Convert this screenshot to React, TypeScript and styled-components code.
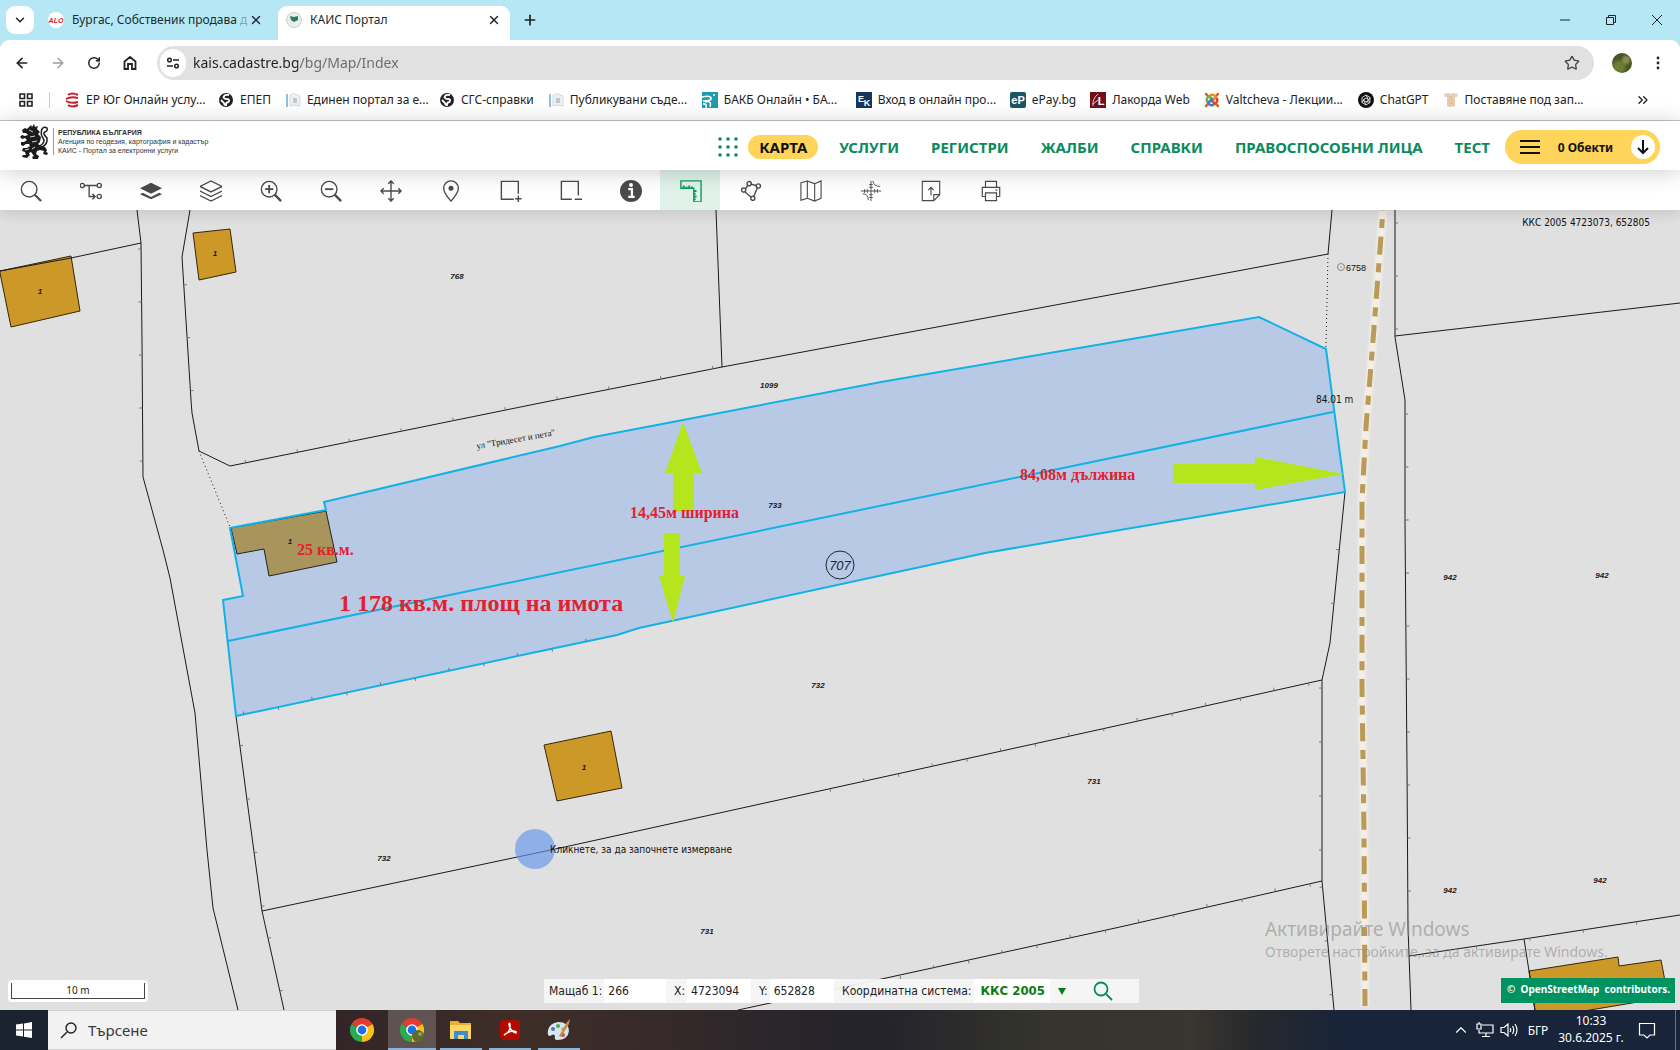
import React from "react";
import styled, { createGlobalStyle } from "styled-components";
import { ArrowLeft, ArrowRight, RotateCw, Star, X, Plus, ChevronDown, ChevronUp, ChevronsRight } from "lucide-react";

const ui = `"Noto Sans", "Open Sans", sans-serif`;
const mapUi = `"DejaVu Sans Condensed", "DejaVu Sans", sans-serif`;
const green = "#0b8a5c";

const GlobalStyle = createGlobalStyle`
  * { box-sizing: border-box; }
  body { margin: 0; font-family: ${ui}; color: #222; overflow: hidden; }
  button, input, select { font-family: inherit; border: 0; background: none; padding: 0; margin: 0; color: inherit; outline: 0; }
  a { color: inherit; text-decoration: none; }
  svg { display: block; flex: none; }
`;

const Screen = styled.div`
  display: flex;
  flex-direction: column;
  height: 100vh;
  min-width: 0;
`;

/* ---------- browser window ---------- */

const TabStrip = styled.div`
  display: flex;
  align-items: flex-end;
  gap: 6px;
  height: 40px;
  flex: none;
  background: #b5e8f4;
  padding-left: 6px;
`;

const TabSearch = styled.button`
  width: 28px;
  height: 28px;
  margin-bottom: 6px;
  border-radius: 9px;
  background: #fff;
  display: grid;
  place-items: center;
`;

const Tab = styled.div<{ $active?: boolean }>`
  display: flex;
  align-items: center;
  gap: 8px;
  width: 232px;
  height: 34px;
  padding: 0 8px 6px 8px;
  font-size: 12px;
  line-height: 20px;
  border-radius: 9px 9px 0 0;
  background: ${(p) => (p.$active ? "#fff" : "transparent")};
  color: #1b2b30;
`;

const TabTitle = styled.span`
  flex: 1;
  min-width: 0;
  white-space: nowrap;
`;

const Fading = styled.span`
  opacity: 0.35;
`;

const WindowControls = styled.div`
  display: flex;
`;

const IconButton = styled.button<{ $w?: number; $h?: number }>`
  width: ${(p) => p.$w ?? 36}px;
  height: ${(p) => p.$h ?? 34}px;
  display: grid;
  place-items: center;
  flex: none;
`;

const Spacer = styled.div`
  flex: 1;
`;

const ChromeBack = styled.div`
  background: #b5e8f4;
  flex: none;
`;

const ChromePanel = styled.div`
  background: #fff;
  border-radius: 9px 9px 0 0;
  border-bottom: 1px solid #c4c4c4;
  height: 81px;
`;

const AddressRow = styled.div`
  display: flex;
  align-items: center;
  height: 46px;
  padding: 0 4px;
`;

const Omnibox = styled.label`
  flex: 1;
  height: 34px;
  margin: 0 10px 0 9px;
  border-radius: 17px;
  background: #e1e1e1;
  display: flex;
  align-items: center;
  gap: 7px;
  padding: 0 14px 0 3px;
`;

const SiteInfo = styled.span`
  width: 26px;
  height: 28px;
  border-radius: 14px;
  background: #fff;
  display: grid;
  place-items: center;
`;

const UrlInput = styled.input`
  flex: 1;
  min-width: 0;
  font-size: 14px;
  line-height: 20px;
  font-family: "Noto Sans", sans-serif;
  background: linear-gradient(90deg, #1f1f1f 105px, #6a6a6a 105px);
  background-clip: text;
  -webkit-text-fill-color: transparent;
`;

const Avatar = styled.span`
  width: 20px;
  height: 20px;
  border-radius: 50%;
  background: radial-gradient(circle at 70% 35%, #8c8a50 0 12%, transparent 30%), radial-gradient(circle at 35% 70%, #6d8031 0 20%, transparent 45%), #4b5524;
`;

const BookmarkBar = styled.nav`
  display: flex;
  align-items: center;
  height: 28px;
  padding: 0 24px 0 18px;
`;

const BarRule = styled.span`
  width: 1px;
  height: 16px;
  background: #a9d8ec;
  margin: 0 14px 0 15px;
`;

const Bookmark = styled.a<{ $full?: boolean }>`
  display: flex;
  align-items: center;
  gap: 6px;
  flex: none;
  width: ${(p) => (p.$full ? "154px" : "auto")};
  margin-right: ${(p) => (p.$full ? "0" : "14px")};
  font-size: 12px;
  line-height: 16px;
  white-space: nowrap;
  color: #222;
`;

/* ---------- portal header ---------- */

const PortalHeader = styled.header`
  display: flex;
  align-items: center;
  height: 49px;
  flex: none;
  padding: 3px 20px 0;
  background: #fff;
  position: relative;
  z-index: 2;
  box-shadow: 0 2px 22px rgba(0, 0, 0, 0.2);
`;

const Brand = styled.a`
  display: flex;
  align-items: flex-start;
  align-self: flex-start;
  gap: 4px;
`;

const BrandText = styled.span`
  border-left: 1px solid #999;
  padding-left: 4px;
  margin-top: 4px;
  display: grid;
  font-family: "Liberation Sans Narrow", "Liberation Sans", sans-serif;
  font-size: 7px;
  line-height: 9px;
  color: #333;
  white-space: nowrap;
`;

const PortalNav = styled.nav`
  display: flex;
  align-items: center;
  gap: 10px;
`;

const NavLink = styled.a<{ $active?: boolean }>`
  font-size: 15px;
  font-weight: 700;
  line-height: 24px;
  white-space: nowrap;
  padding: 0 11px;
  border-radius: 12px;
  color: ${(p) => (p.$active ? "#111" : green)};
  background: ${(p) => (p.$active ? "#ffd45a" : "transparent")};
`;

const ObjectsButton = styled.button`
  display: flex;
  align-items: center;
  width: 155px;
  height: 34px;
  margin-left: 4px;
  padding: 0 5px 0 15px;
  border-radius: 17px;
  background: #ffd45a;
  font-size: 12px;
  font-weight: 700;
  color: #111;
`;

const ObjectsLabel = styled.span`
  flex: 1;
  text-align: center;
`;

const RoundMark = styled.span`
  width: 24px;
  height: 24px;
  border-radius: 50%;
  background: #fff;
  display: grid;
  place-items: center;
`;

const ToolBar = styled.div`
  display: flex;
  height: 40px;
  flex: none;
  background: #fff;
  position: relative;
  z-index: 1;
  box-shadow: 0 2px 16px rgba(0, 0, 0, 0.14);
`;

const Tool = styled.button<{ $active?: boolean }>`
  width: 60px;
  height: 40px;
  padding: 2px 0 0 2px;
  display: grid;
  place-items: center;
  color: ${(p) => (p.$active ? "#0a9a66" : "#4a4a4a")};
  background: ${(p) => (p.$active ? "#e0f2ea" : "transparent")};
`;

/* ---------- map ---------- */

const MapArea = styled.main`
  flex: 1;
  min-height: 0;
  position: relative;
  background: #e0e0e0;
  overflow: hidden;
`;

const MapSvg = styled.svg`
  width: 100%;
  height: 100%;
`;

const MapFooter = styled.div`
  position: absolute;
  left: 8px;
  right: 5px;
  bottom: 7px;
  height: 25px;
  display: grid;
  grid-template-columns: 1fr auto 1fr;
  align-items: center;
`;

const ScaleBox = styled.div`
  width: 140px;
  height: 22px;
  padding: 3px;
  border-radius: 4px;
  background: #fff;
`;

const ScaleLine = styled.div`
  height: 16px;
  border: 1px solid #444;
  border-top: 0;
  font-size: 10px;
  line-height: 15px;
  text-align: center;
`;

const StatusBar = styled.form`
  display: flex;
  align-items: center;
  width: 595px;
  height: 24px;
  padding-left: 5px;
  background: rgba(246, 246, 246, 0.95);
  font-family: ${mapUi};
  font-size: 12px;
  white-space: nowrap;
  color: #222;
`;

const Field = styled.label<{ $w: number }>`
  display: flex;
  align-items: center;
  gap: 2px;
  width: ${(p) => p.$w}px;
`;

const FieldInput = styled.input`
  flex: 1;
  min-width: 0;
  height: 24px;
  margin-right: 8px;
  padding-left: 4px;
  background: #fff;
  font-size: 12px;
`;

const SystemSelect = styled.select`
  appearance: none;
  width: 80px;
  height: 24px;
  padding-left: 7px;
  background: #fff;
  color: #0a7d12;
  font-size: 13px;
  font-weight: 700;
`;

const Attribution = styled.a`
  justify-self: end;
  display: flex;
  align-items: center;
  justify-content: space-between;
  width: 174px;
  height: 25px;
  padding: 0 5px 4px 6px;
  background: #009260;
  color: #fff;
  font-size: 10px;
  font-weight: 700;
  white-space: nowrap;
`;

/* ---------- taskbar ---------- */

const TaskBar = styled.footer`
  display: flex;
  height: 40px;
  flex: none;
  background: linear-gradient(90deg, #1b2230 0, #1b2230 3%, #332527 20%, #3f2e27 31%, #35292a 40%, #25242a 50%, #26242b 53%, #34342c 62%, #39352f 71%, #26282d 75%, #18243a 80%, #18243a 100%);
  color: #fff;
`;

const TaskButton = styled.button<{ $w: number; $open?: boolean; $active?: boolean }>`
  width: ${(p) => p.$w}px;
  height: 40px;
  display: grid;
  place-items: center;
  background: ${(p) => (p.$active ? "rgba(255,255,255,0.2)" : "transparent")};
  ${(p) =>
    p.$open &&
    `background-image: linear-gradient(#87b4d8, #87b4d8);
     background-size: ${p.$active ? "100%" : "42px"} 2px;
     background-position: bottom center;
     background-repeat: no-repeat;`}
`;

const TaskSearch = styled.label`
  width: 288px;
  height: 40px;
  display: flex;
  align-items: center;
  gap: 11px;
  padding-left: 12px;
  background: #f2f2f2;
  border: 1px solid #d0d0d0;
  border-width: 1px 0;
  color: #222;
`;

const TaskInput = styled.input`
  flex: 1;
  min-width: 0;
  font-size: 15px;
  line-height: 20px;
  &::placeholder { color: #3a3a3a; opacity: 1; }
`;

const Clock = styled.time`
  width: 72px;
  text-align: center;
  font-size: 12px;
  line-height: 17px;
  padding-top: 2px;
  white-space: nowrap;
`;

const Lang = styled.button`
  width: 34px;
  font-size: 12px;
`;

const ShowDesktop = styled.button`
  width: 5px;
  margin-left: 8px;
  border-left: 1px solid #6a7383;
`;

/* ---------- small drawings ---------- */

const S = (p: React.SVGProps<SVGSVGElement> & { size: number; box?: number }) => {
  const { size, box, children, ...rest } = p;
  return (
    <svg width={size} height={size} viewBox={`0 0 ${box ?? size} ${box ?? size}`} fill="none" stroke="currentColor" aria-hidden="true" {...rest}>
      {children}
    </svg>
  );
};

const logoText = { textAnchor: "middle" as const, fontFamily: "Liberation Sans, sans-serif", fontWeight: 700, fill: "#fff", stroke: "none" };

const marks: Record<string, React.ReactNode> = {
  er: (
    <S size={16} stroke="#c8202c" strokeWidth="2">
      <path d="M14 3Q8 0 4 3M14 6Q7 4 2 7M14 10Q7 12 2 9M14 13Q8 16 4 13" />
    </S>
  ),
  globe: (
    <S size={16} stroke="none">
      <circle cx="8" cy="8" r="7" fill="#222" />
      <path d="M11 3Q6 2 5.500 5.500Q7 7.500 10 7Q12 8 10.500 10Q8 10 8 13Q6 13 6 11L3 8" fill="none" stroke="#fff" strokeWidth="1.800" />
    </S>
  ),
  doc: (
    <S size={16} stroke="none">
      <path d="M1 2H3V15H1Z" fill="#8fbfe2" />
      <path d="M5 3Q8 1 10 2L15 4V14Q10 12 5 14Z" fill="#eef1f3" stroke="#d5dade" />
      <path d="M8 6H12V11H8Z" fill="#c0c7d1" />
    </S>
  ),
  bakb: (
    <S size={16} stroke="none">
      <path d="M0 0H16V16H0Z" fill="#1f9aae" />
      <path d="M0 5Q8 3 9 6T1 9M3 10Q10 8 8 15M1 12Q5 11 4 16" fill="none" stroke="#fff" strokeWidth="1.600" />
      <circle cx="12" cy="3" r="1" fill="#fff" />
    </S>
  ),
  ek: (
    <S size={16}>
      <path d="M0 0H16V16H0Z" fill="#15355c" stroke="none" />
      <text x="5" y="10" fontSize="9" {...logoText}>E</text>
      <text x="11" y="14" fontSize="9" {...logoText}>K</text>
    </S>
  ),
  epay: (
    <S size={16}>
      <rect width="16" height="16" rx="2" fill="#1c5563" stroke="none" />
      <text x="8" y="12" fontSize="11" {...logoText}>eP</text>
    </S>
  ),
  lak: (
    <S size={16} stroke="#e6cfcf">
      <path d="M0 0H16V16H0Z" fill="#711018" stroke="none" />
      <path d="M8 2Q2 7 3 14M3 12L8 8" />
      <text x="11" y="13" fontSize="11" {...logoText}>L</text>
    </S>
  ),
  joomla: (
    <S size={16} strokeWidth="2.500" strokeLinecap="round">
      <path d="M3 9Q2 6 5 4L9 8" stroke="#72b043" />
      <path d="M7 3Q10 2 12 5L8 9" stroke="#f08a24" />
      <path d="M13 7Q14 10 11 12L7 8" stroke="#e0452f" />
      <path d="M9 13Q6 14 4 11L8 7" stroke="#3b7fc4" />
      <path d="M2 2L3 3M14 2L13 3M14 14L13 13M2 14L3 13" stroke="#d9662f" />
    </S>
  ),
  gpt: (
    <S size={16} stroke="#fff" strokeWidth="0.800">
      <circle cx="8" cy="8" r="8" fill="#111" stroke="none" />
      <path d="M8 3L12 5.500V10.500L8 13L4 10.500V5.500ZM8 6L10 7V9L8 10L6 9V7ZM8 3L10 7M12 10L8 10M4 10.500L6 7M12 5.500L10 9M8 13L6 9" />
    </S>
  ),
  shirt: (
    <S size={16} stroke="none">
      <path d="M1 2L6 1Q8 3 10 1L15 2L14 5H12V14Q8 16 4 14V5H2Z" fill="#e9cdb0" />
      <path d="M6 5H10M6 8H10M6 11H10" stroke="#d8b48f" />
    </S>
  ),
};

const bookmarks: [string, string, boolean][] = [
  ["er", "ЕР Юг Онлайн услу...", true],
  ["globe", "ЕПЕП", false],
  ["doc", "Единен портал за е...", true],
  ["globe", "СГС-справки", false],
  ["doc", "Публикувани съде...", true],
  ["bakb", "БАКБ Онлайн • БА...", true],
  ["ek", "Вход в онлайн про...", true],
  ["epay", "ePay.bg", false],
  ["lak", "Лакорда Web", false],
  ["joomla", "Valtcheva - Лекции...", true],
  ["gpt", "ChatGPT", false],
  ["shirt", "Поставяне под зап...", true],
];

const tools: { name: string; active?: boolean; icon: React.ReactNode }[] = [
  { name: "Търсене", icon: <><circle cx="10" cy="10" r="8.500" /><path d="M16 16L23 23" strokeWidth="2.300" /></> },
  { name: "Мрежа", icon: <><circle cx="2.500" cy="6" r="2.300" /><circle cx="21" cy="6" r="2.300" /><circle cx="21" cy="18" r="2.300" /><path d="M5 6H18.500M10 6V18H16M13.500 15L16.500 18L13.500 21" /></> },
  { name: "Слой", icon: <><path d="M0 9L12 3L24 9L12 15Z" fill="currentColor" stroke="none" /><path d="M3 14L0 15.500L12 21L24 15.500L21 14L12 18.500Z" fill="currentColor" stroke="none" /></> },
  { name: "Слоеве", icon: <path d="M0 7L12 1L24 7L12 13ZM0 12L12 18L24 12M0 17L12 23L24 17" /> },
  { name: "Приближи", icon: <><circle cx="10" cy="10" r="8.500" /><path d="M16 16L23 23" strokeWidth="2.500" /><path d="M10 5.500V14.500M5.500 10H14.500" strokeWidth="2" /></> },
  { name: "Отдалечи", icon: <><circle cx="10" cy="10" r="8.500" /><path d="M16 16L23 23" strokeWidth="2.500" /><path d="M5.500 10H14.500" strokeWidth="2" /></> },
  { name: "Премести", icon: <path d="M12 1V23M1 12H23M9 4L12 1L15 4M9 20L12 23L15 20M4 9L1 12L4 15M20 9L23 12L20 15" /> },
  { name: "Маркер", icon: <><path d="M12 23Q4 14 4 9A8 8 0 0 1 20 9Q20 14 12 23Z" /><circle cx="12" cy="9" r="2" fill="currentColor" /></> },
  { name: "Добави", icon: <path d="M20 15V1.500H1.500V21H15M20 17V24M16.500 20.500H23.500" /> },
  { name: "Премахни", icon: <path d="M20 17V1.500H1.500V21H13M16 21H24" /> },
  { name: "Информация", icon: <><circle cx="12" cy="12" r="12" fill="currentColor" stroke="none" /><circle cx="12" cy="5.500" r="2.200" fill="#fff" stroke="none" /><path d="M9 10H13V18.500M9 18.500H16" stroke="#fff" strokeWidth="2.500" /></> },
  { name: "Измерване", active: true, icon: <><path d="M1 1H23V24H15V9H1Z" /><path d="M4 6V9M7 7V9M10 6V9M13 7V9M15 12H18M15 15H17M15 18H18M15 21H17" strokeWidth="2" /></> },
  { name: "Геометрия", icon: <><circle cx="10" cy="4" r="2.300" /><circle cx="4" cy="11" r="2.300" /><circle cx="20" cy="6.500" r="2.300" /><circle cx="14" cy="20" r="2.300" /><path d="M6 9.500L8.500 6M12 4.500L17.500 6M19 8.500L15 18M5.500 13L12 18.500" /></> },
  { name: "Карта", icon: <path d="M1 3L8 1V20L1 22ZM8 1L16 4V23L8 20M16 4L23 1V20L16 23" strokeWidth="1.200" /> },
  { name: "Координати", icon: <path d="M12 1V23M1 12H23M14 1Q15 7 22 7M3 15Q9 15 9 22M5 10V14M8 10V14M16 10V14M19 10V14M10 5H14M10 8H14M10 16H14M10 19H14" strokeWidth="1" /> },
  { name: "Качи файл", icon: <path d="M2.500 1.500H21.500V16L15 22.500H2.500ZM15 22.500V16H21.500M12 17V8M9 11L12 8L15 11" strokeWidth="1.200" /> },
  { name: "Печат", icon: <path d="M6 8V1.500H18V8M6 18H2.500V8H21.500V18H18M6 14H18V22.500H6ZM17 11H19" strokeWidth="1.300" /> },
];

const ChromeLogo = ({ user }: { user?: boolean }) => (
  <S size={24} stroke="none">
    <path d="M12 12L1.600 6A12 12 0 0 1 22.400 6Z" fill="#e33b2e" />
    <path d="M12 12L22.400 6A12 12 0 0 1 12 24Z" fill="#fbc116" />
    <path d="M12 12L12 24A12 12 0 0 1 1.600 6Z" fill="#2da94f" />
    <path d="M12 6H22.400L20 5L12 3Z" fill="#e33b2e" />
    <circle cx="12" cy="12" r="5.800" fill="#fff" />
    <circle cx="12" cy="12" r="4.400" fill="#1b72e8" />
    {user && <circle cx="18" cy="18" r="6" fill="#5f6b2c" />}
    {user && <circle cx="20" cy="16" r="2" fill="#a09b52" />}
  </S>
);

const Lion = () => (
  <svg width="29" height="36" viewBox="0 0 29 36" aria-hidden="true">
    <path
      fill="#1c1c1c"
      d="M9 3L11 1L12 3L14 0L15 3L18 2L17 5L20 8L18 10L21 13L20 18L18 20L21 22L25 23L27 26L26 28L28 29L27 31L23 30L24 27L20 26L17 27L16 30L19 32L18 35L13 35L12 33L14 32L11 28L9 29L10 31L7 34L2 33L3 31L6 31L5 28L2 27L3 24L7 24L10 22L9 20L6 20L3 22L1 21L1 18L4 18L7 16L5 14L2 15L0 13L2 11L5 12L8 11L6 9L3 9L2 6L5 4L7 5Z"
    />
    <path fill="none" stroke="#1c1c1c" strokeWidth="1.500" d="M20 22Q26 18 23 14T22 5Q24 2 27 4Q28 7 25 8T27 14Q28 20 22 23" />
    <path fill="none" stroke="#fff" strokeWidth="0.800" d="M9 6L13 8M10 13L15 12M12 18L17 17M5 26L9 25M15 23L12 25M9 30L11 29" />
  </svg>
);

/* ---------- cadastral drawing ---------- */

type P = [number, number];
const pts = (a: P[]) => a.map((p) => p.join(",")).join(" ");

const boundaries: P[][] = [
  [[137, 210], [141, 243], [142, 342], [143, 477], [163, 550], [170, 578], [195, 713], [207, 850], [213, 908], [238, 1010]],
  [[190, 210], [182, 257], [191, 400], [192, 413], [199, 451], [230, 466], [560, 399], [722, 367], [1120, 293], [1328, 254], [1332, 210]],
  [[716, 210], [718, 263], [722, 367]],
  [[0, 271], [71, 258], [141, 243]],
  [[236, 716], [247, 800], [262, 911], [284, 1010]],
  [[262, 911], [560, 848], [1120, 725], [1322, 680]],
  [[1345, 492], [1330, 643], [1322, 680], [1322, 881], [1334, 1010]],
  [[738, 1010], [877, 980], [1120, 927], [1322, 881]],
  [[1395, 210], [1395, 337], [1405, 400], [1405, 523], [1407, 767], [1408, 927], [1411, 1010]],
  [[1395, 336], [1680, 303]],
  [[1409, 956], [1524, 939], [1680, 915]],
  [[1524, 939], [1529, 971], [1535, 1010]],
];

const parcel: P[] = [
  [230, 528], [326, 510], [324, 502], [560, 446], [594, 437], [683, 420], [881, 382], [1120, 341], [1259, 317], [1326, 349],
  [1345, 492], [1120, 530], [985, 553], [639, 628], [617, 635], [560, 647], [236, 716], [223, 600], [243, 596],
];

const buildings: P[][] = [
  [[0, 271], [71, 256], [80, 311], [11, 327], [0, 273]],
  [[193, 233], [230, 229], [236, 272], [199, 280]],
  [[544, 745], [611, 731], [622, 788], [557, 801]],
  [[1529, 971], [1618, 957], [1619, 966], [1661, 960], [1668, 997], [1584, 1011], [1535, 1011]],
];

const parcelNumbers: [string, number, number][] = [
  ["768", 457, 279], ["1099", 769, 388], ["733", 775, 508], ["732", 818, 688], ["731", 1094, 784], ["732", 384, 861],
  ["731", 707, 934], ["942", 1450, 580], ["942", 1602, 578], ["942", 1450, 893], ["942", 1600, 883],
  ["1", 40, 294], ["1", 215, 256], ["1", 290, 544], ["1", 584, 770],
];

const notes: [string, number, number, number][] = [
  ["14,45м ширина", 630, 518, 16],
  ["84,08м дължина", 1020, 480, 16],
  ["25 кв.м.", 297, 555, 16],
  ["1 178 кв.м. площ на имота", 339, 611, 24],
];

/* Short marks at an even step along a boundary, on one side of it or on both in turn. */
const ticks = (a: P, b: P, step: number, start: number, both: boolean, flip = 1) => {
  const len = Math.hypot(b[0] - a[0], b[1] - a[1]);
  const ux = (b[0] - a[0]) / len;
  const uy = (b[1] - a[1]) / len;
  let d = "";
  for (let s = start, i = 0; s < len; s += step, i++) {
    const side = (both && i % 2 ? -1 : 1) * flip;
    const x = a[0] + ux * s;
    const y = a[1] + uy * s;
    d += `M${x.toFixed(1)} ${y.toFixed(1)}l${(uy * 3 * side).toFixed(1)} ${(-ux * 3 * side).toFixed(1)}`;
  }
  return d;
};

const tickPaths = [
  ticks([141, 243], [143, 477], 53, 6, false, -1),
  ticks([182, 257], [191, 400], 53, 28, false),
  ticks([230, 466], [560, 399], 53, 16, false),
  ticks([560, 399], [722, 367], 53, 50, false),
  ticks([236, 716], [617, 635], 35, 8, true),
  ticks([236, 716], [262, 911], 54, 30, false),
  ticks([262, 911], [284, 1010], 54, 28, false),
  ticks([830, 789], [1322, 680], 35, 0, true, -1),
  ticks([900, 976], [1322, 881], 35, 0, true, -1),
  ticks([1322, 687], [1322, 881], 54, 1, false, -1),
  ticks([1322, 881], [1334, 1010], 54, 6, false, -1),
  ticks([1344, 500], [1330, 643], 54, 50, false, -1),
  ticks([1395, 210], [1395, 337], 53, 13, false),
  ticks([1405, 400], [1408, 927], 53, 14, false),
  ticks([1409, 956], [1680, 915], 54, 14, false, -1),
];

const road = "M1383 210L1374 328L1366 427L1362 500L1362 686L1364 833L1365 1006";

const CadastralMap = () => (
  <MapSvg viewBox="0 210 1680 800" preserveAspectRatio="xMidYMid slice" role="img" aria-label="Кадастрална карта">
    <defs>
      <filter id="soft" x="-50%" width="200%"><feGaussianBlur stdDeviation="1" /></filter>
    </defs>
    <g fill="none" strokeLinejoin="round">
      <path d={road} stroke="#f3eee6" strokeWidth="8" filter="url(#soft)" />
      <path d={road} stroke="#b99a58" strokeWidth="5" strokeDasharray="18 8.700 9 8.600" strokeDashoffset="17.600" />
    </g>
    <g fill="#cc9928" stroke="#33270a">
      {buildings.map((b, i) => <polygon key={i} points={pts(b)} />)}
    </g>
    <polygon points={pts(parcel)} fill="#b8c9e6" />
    <polygon points="231,528 326,511 337,562 269,576 264,549 237,554" fill="#a8955c" stroke="#222" />
    <g fill="none" stroke="#1a1a1a">
      {boundaries.map((b, i) => <polyline key={i} points={pts(b)} />)}
      <path d="M199 451L230 527M1328 254L1326 347" strokeDasharray="1 3" />
    </g>
    <g fill="none" stroke="#12b2e4" strokeWidth="2">
      <polygon points={pts(parcel)} />
      <path d="M228 641L1333 412" />
    </g>
    <path d={tickPaths.join("")} stroke="#777" fill="none" />
    <g fill="#b5e61d">
      <path d="M683 422L702 473H694V512H673V473H665Z" />
      <path d="M664 533H680V576H685L673 623L659 576H664Z" />
      <path d="M1173 464H1255V457L1344 474L1255 490V483H1173Z" />
    </g>
    <circle cx="535" cy="849" r="20" fill="#6495ed" fillOpacity="0.650" />
    <circle cx="840" cy="565" r="14" fill="none" stroke="#1c2430" />
    <circle cx="1341" cy="267" r="3.500" fill="none" stroke="#888" />
    <circle cx="1341" cy="267" r="0.700" fill="#888" />
    <g fontFamily="Liberation Sans, Arial, sans-serif" fontSize="8" fontWeight="700" fontStyle="italic" textAnchor="middle" fill="#1a1a1a">
      {parcelNumbers.map(([t, x, y], i) => <text key={i} x={x} y={y}>{t}</text>)}
    </g>
    <text x="840" y="570" textAnchor="middle" fontFamily="Liberation Sans, Arial, sans-serif" fontSize="13" fontStyle="italic" fill="#1c2430">707</text>
    <text x="1346" y="271" fontFamily="Liberation Sans, Arial, sans-serif" fontSize="9" fill="#111">6758</text>
    <text x="477" y="449" transform="rotate(-10 477 449)" fontFamily="Liberation Serif, serif" fontSize="9" fill="#111">ул "Тридесет и пета"</text>
    <g fontFamily="DejaVu Sans Condensed, DejaVu Sans, sans-serif" fontSize="10" fill="#111">
      <text x="1316" y="403">84.01 m</text>
      <text x="1650" y="226" textAnchor="end">ККС 2005 4723073, 652805</text>
      <text x="550" y="853">Кликнете, за да започнете измерване</text>
    </g>
    <g fontFamily="Liberation Serif, serif" fontWeight="700" fill="#e3202e">
      {notes.map(([t, x, y, s]) => <text key={t} x={x} y={y} fontSize={s}>{t}</text>)}
    </g>
    <g fontFamily="Noto Sans, sans-serif" fill="#8c8c8c" fillOpacity="0.600">
      <text x="1265" y="936" fontSize="19">Активирайте Windows</text>
      <text x="1265" y="957" fontSize="14">Отворете настройките, за да активирате Windows.</text>
    </g>
  </MapSvg>
);

const nav = ["КАРТА", "УСЛУГИ", "РЕГИСТРИ", "ЖАЛБИ", "СПРАВКИ", "ПРАВОСПОСОБНИ ЛИЦА", "ТЕСТ"];

export default function App() {
  return (
    <Screen>
      <GlobalStyle />
      <TabStrip>
        <TabSearch aria-label="Раздели"><ChevronDown size={14} strokeWidth={2.5} /></TabSearch>
        <Tab>
          <S size={16} stroke="none"><circle cx="8" cy="8" r="8" fill="#fff" /><text x="8" y="11" fontSize="7" {...logoText} fill="#d8232f" fontStyle="italic">ALO</text></S>
          <TabTitle>Бургас, Собственик продава<Fading> д</Fading></TabTitle>
          <IconButton $w={16} $h={16} aria-label="Затвори"><X size={14} strokeWidth={2.5} /></IconButton>
        </Tab>
        <Tab $active>
          <S size={16} stroke="none"><circle cx="8" cy="8" r="7.500" fill="#e9eeec" stroke="#c7cfcc" /><path d="M4 4L8 5L12 4L12 8L8 10L5 8Z" fill="#2b7d5a" /></S>
          <TabTitle>КАИС Портал</TabTitle>
          <IconButton $w={16} $h={16} aria-label="Затвори"><X size={14} strokeWidth={2.5} /></IconButton>
        </Tab>
        <IconButton $w={28} $h={40} aria-label="Нов раздел"><Plus size={16} strokeWidth={2.5} /></IconButton>
        <Spacer />
        <WindowControls>
          <IconButton $w={46} $h={40} aria-label="Минимизирай"><S size={12}><path d="M1 6H11" /></S></IconButton>
          <IconButton $w={46} $h={40} aria-label="Възстанови"><S size={12}><path d="M1.500 3.500H8.500V10.500H1.500ZM3.500 3.500V1.500H10.500V8.500H8.500" /></S></IconButton>
          <IconButton $w={46} $h={40} aria-label="Затвори прозореца"><S size={12}><path d="M1 1L11 11M11 1L1 11" /></S></IconButton>
        </WindowControls>
      </TabStrip>
      <ChromeBack>
        <ChromePanel>
          <AddressRow>
            <IconButton aria-label="Назад"><ArrowLeft size={16} strokeWidth={2.5} /></IconButton>
            <IconButton aria-label="Напред"><ArrowRight size={16} color="#999" /></IconButton>
            <IconButton aria-label="Презареди"><RotateCw size={14} strokeWidth={2.5} /></IconButton>
            <IconButton aria-label="Начало"><S size={14} strokeWidth="1.800"><path d="M1.500 5.500L7 1L12.500 5.500V13H9V8H5V13H1.500Z" /></S></IconButton>
            <Omnibox>
              <SiteInfo><S size={14} strokeWidth="1.500"><circle cx="3.500" cy="4" r="1.800" /><path d="M7 4H13M1 10H7" /><circle cx="10.500" cy="10" r="1.800" /></S></SiteInfo>
              <UrlInput aria-label="Адрес" defaultValue="kais.cadastre.bg/bg/Map/Index" />
              <Star size={16} color="#444" />
            </Omnibox>
            <IconButton aria-label="Профил"><Avatar /></IconButton>
            <IconButton aria-label="Меню"><S size={16} stroke="none" fill="#222"><circle cx="8" cy="3" r="1.400" /><circle cx="8" cy="8" r="1.400" /><circle cx="8" cy="13" r="1.400" /></S></IconButton>
          </AddressRow>
          <BookmarkBar>
            <S size={16} strokeWidth="1.600"><path d="M2 2H6.500V6.500H2ZM9.500 2H14V6.500H9.500ZM2 9.500H6.500V14H2ZM9.500 9.500H14V14H9.500Z" /></S>
            <BarRule />
            {bookmarks.map(([icon, label, full], i) => (
              <Bookmark key={i} href="#" $full={full}>{marks[icon]}{label}</Bookmark>
            ))}
            <Spacer />
            <IconButton $w={26} $h={28} aria-label="Още отметки"><ChevronsRight size={16} /></IconButton>
          </BookmarkBar>
        </ChromePanel>
      </ChromeBack>
      <PortalHeader>
        <Brand href="#">
          <Lion />
          <BrandText><b>РЕПУБЛИКА БЪЛГАРИЯ</b><span>Агенция по геодезия, картография и кадастър</span><span>КАИС - Портал за електронни услуги</span></BrandText>
        </Brand>
        <Spacer />
        <PortalNav>
          <S size={20} stroke="none" fill={green}>
            {[2, 10, 18].flatMap((y) => [2, 10, 18].map((x) => <circle key={`${x}-${y}`} cx={x} cy={y} r="1.800" />))}
          </S>
          {nav.map((n, i) => <NavLink key={n} href="#" $active={i === 0}>{n}</NavLink>)}
        </PortalNav>
        <ObjectsButton>
          <S size={20} strokeWidth="2"><path d="M0 4H20M0 10H20M0 16H20" /></S>
          <ObjectsLabel>0 Обекти</ObjectsLabel>
          <RoundMark><S size={16} strokeWidth="2"><path d="M8 1V14M3 9L8 14L13 9" /></S></RoundMark>
        </ObjectsButton>
      </PortalHeader>
      <ToolBar>
        {tools.map((t) => (
          <Tool key={t.name} $active={t.active} aria-label={t.name}>
            <S size={22} box={24} strokeWidth="1.500">{t.icon}</S>
          </Tool>
        ))}
      </ToolBar>
      <MapArea>
        <CadastralMap />
        <MapFooter>
          <ScaleBox><ScaleLine>10 m</ScaleLine></ScaleBox>
          <StatusBar>
            <Field $w={125}>Мащаб 1:<FieldInput defaultValue="266" /></Field>
            <Field $w={85}>X:<FieldInput defaultValue="4723094" /></Field>
            <Field $w={83}>Y:<FieldInput defaultValue="652828" /></Field>
            <Field $w={208}>Координатна система:<SystemSelect><option>ККС 2005</option></SystemSelect></Field>
            <IconButton $w={24} $h={24} type="button" aria-label="Избор"><S size={10} stroke="none" fill="#0a7d12"><path d="M1 2H9L5 9Z" /></S></IconButton>
            <IconButton $w={58} $h={24} type="button" aria-label="Търси"><S size={20} stroke={green} strokeWidth="1.800"><circle cx="8" cy="8" r="6.500" /><path d="M13 13L19 19" /></S></IconButton>
          </StatusBar>
          <Attribution href="#"><span>©</span><span>OpenStreetMap</span><span>contributors.</span></Attribution>
        </MapFooter>
      </MapArea>
      <TaskBar>
        <TaskButton $w={48} aria-label="Старт"><S size={16} stroke="none" fill="#fff"><path d="M0 2.500L7 1.500V7.500H0ZM8 1.400L16 0V7.500H8ZM0 8.500H7V14.500L0 13.500ZM8 8.500H16V16L8 14.700Z" /></S></TaskButton>
        <TaskSearch>
          <S size={17} strokeWidth="1.400"><circle cx="11" cy="6" r="5" /><path d="M7 10L1 16" /></S>
          <TaskInput aria-label="Търсене" placeholder="Търсене" />
        </TaskSearch>
        <TaskButton $w={52} aria-label="Chrome"><ChromeLogo /></TaskButton>
        <TaskButton $w={48} $open $active aria-label="Chrome профил"><ChromeLogo user /></TaskButton>
        <TaskButton $w={49} $open aria-label="Файлове"><S size={22} stroke="none"><path d="M0 2H8L10 4H21V20H0Z" fill="#e9b02e" /><path d="M0 6H21V20H0Z" fill="#fcd667" /><path d="M4 12H18V20H14V16H8V20H4Z" fill="#3a8fd0" /></S></TaskButton>
        <TaskButton $w={49} $open aria-label="Acrobat"><S size={20} stroke="none"><rect width="20" height="20" rx="4" fill="#b30b00" /><path d="M4 15Q11 12 10 4Q9 2 9 5Q11 12 16 13Q17 11 13 11Q7 12 4 15Z" fill="none" stroke="#fff" strokeWidth="1.400" /></S></TaskButton>
        <TaskButton $w={49} $open aria-label="Paint"><S size={24} stroke="none"><path d="M11 4Q22 4 22 13Q21 22 10 22Q7 22 8 18Q7 15 3 18Q0 18 1 12Q3 5 11 4Z" fill="#d5e6f2" /><circle cx="6" cy="11" r="2" fill="#4778c8" /><circle cx="11" cy="8" r="2" fill="#59a849" /><circle cx="16" cy="11" r="2" fill="#e3b52e" /><circle cx="16" cy="17" r="2" fill="#d04b38" /><path d="M12 18L20 4L23 1L22 6L14 19Z" fill="#c98a4e" /></S></TaskButton>
        <Spacer />
        <IconButton $w={24} $h={40} aria-label="Скрити икони"><ChevronUp size={18} strokeWidth={1.5} /></IconButton>
        <IconButton $w={24} $h={40} aria-label="Мрежа"><S size={18} strokeWidth="1.200"><path d="M6 4H17V12H3V9M10 12V15M6 15.500H14M1 3H5V8H1ZM3 3V1" /></S></IconButton>
        <IconButton $w={24} $h={40} aria-label="Звук"><S size={18} strokeWidth="1.200"><path d="M1 6.500H4L8 3V15L4 11.500H1ZM10 7Q11.500 9 10 11M12.500 5Q15 9 12.500 13M15 3Q19 9 15 15" /></S></IconButton>
        <Lang>БГР</Lang>
        <Clock>10:33<br />30.6.2025 г.</Clock>
        <IconButton $w={40} $h={40} aria-label="Известия"><S size={18} strokeWidth="1.200"><path d="M1.500 2.500H16.500V14H12L9 17L6 14H1.500Z" /></S></IconButton>
        <ShowDesktop aria-label="Работен плот" />
      </TaskBar>
    </Screen>
  );
}
